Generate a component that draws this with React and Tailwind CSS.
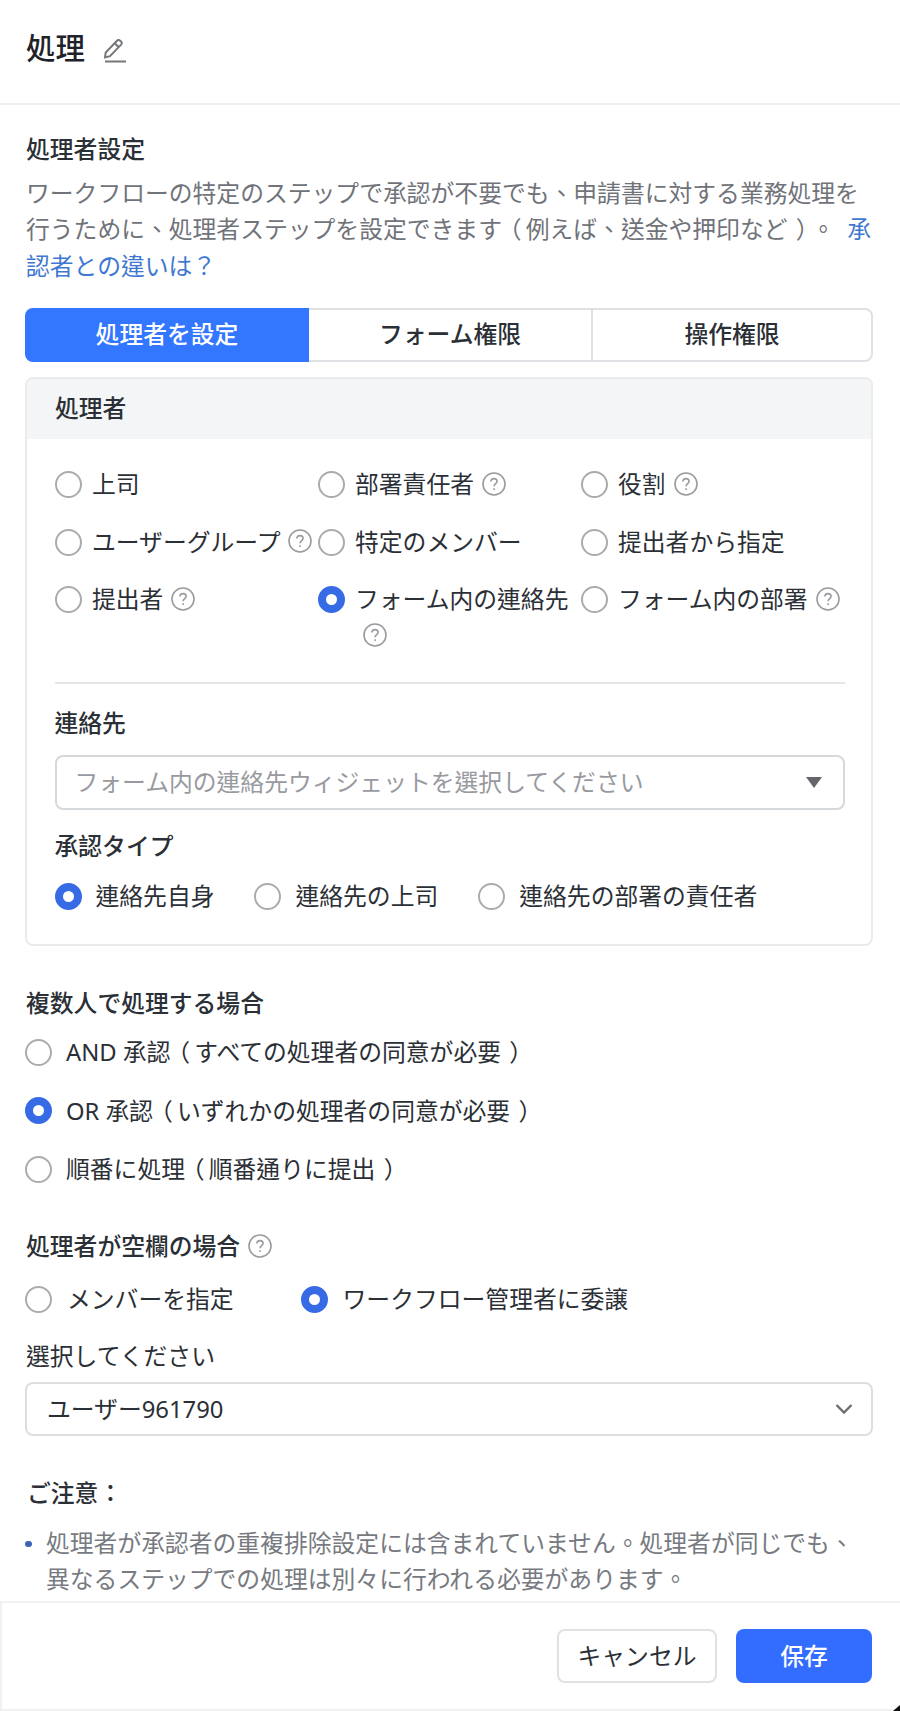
import { useState } from 'react';

const assigneeTypes = [
  { id: 'manager', label: '上司' },
  { id: 'dept-owner', label: '部署責任者', help: true },
  { id: 'role', label: '役割', help: true },
  { id: 'group', label: 'ユーザーグループ', help: true },
  { id: 'member', label: '特定のメンバー' },
  { id: 'by-submitter', label: '提出者から指定' },
  { id: 'submitter', label: '提出者', help: true },
  { id: 'form-contact', label: 'フォーム内の連絡先', help: true },
  { id: 'form-dept', label: 'フォーム内の部署', help: true },
];

const approvalTypes = [
  { id: 'self', label: '連絡先自身' },
  { id: 'manager', label: '連絡先の上司' },
  { id: 'owner', label: '連絡先の部署の責任者' },
];

const multiModes = [
  { id: 'and', label: 'AND 承認', note: 'すべての処理者の同意が必要' },
  { id: 'or', label: 'OR 承認', note: 'いずれかの処理者の同意が必要' },
  { id: 'order', label: '順番に処理', note: '順番通りに提出' },
];

const tabs = [
  { label: '処理者を設定', width: 'w-[284px]' },
  { label: 'フォーム権限', width: 'w-[282px]' },
  { label: '操作権限', width: 'flex-1' },
];

// Full-width parentheses, centred in their cells
function Paren({ children }) {
  return (
    <>
      <span className="-ml-[0.18em] mr-[0.18em]">（</span>
      {children}
      <span className="ml-[0.35em] -mr-[0.35em]">）</span>
    </>
  );
}

function HelpIcon({ className = '' }) {
  return (
    <svg viewBox="0 0 24 24" fill="none" stroke="#999b9f" strokeWidth="1.6" className={`inline-block w-6 h-6 ${className}`}>
      <circle cx="12" cy="12" r="11" />
      <path d="M8.9 9.6c0-1.9 1.3-3 3.1-3s3.1 1.1 3.1 2.7c0 2.2-3 2.3-3 4.9" />
      <path d="M12.1 16.2v1.8" />
    </svg>
  );
}

function Radio({ checked, onClick, className = '' }) {
  return (
    <button
      type="button"
      role="radio"
      aria-checked={checked}
      onClick={onClick}
      className={`shrink-0 w-[27px] h-[27px] rounded-full bg-white ${
        checked ? 'border-[8.5px] border-[#376be6]' : 'border-2 border-[#a9abae]'
      } ${className}`}
    />
  );
}

export default function App() {
  const [tab, setTab] = useState(0);
  const [assignee, setAssignee] = useState('form-contact');
  const [approval, setApproval] = useState('self');
  const [mode, setMode] = useState('or');
  const [fallback, setFallback] = useState('admin');

  return (
    <div className="relative flex flex-col w-[900px] h-[1711px] overflow-hidden bg-white text-[#2b2f36] text-[23.8px] leading-[36.5px] font-['Noto_Sans','Noto_Sans_CJK_TC',sans-serif] [text-spacing-trim:space-all]">
      {/* Header */}
      <header className="shrink-0 flex items-center h-[105px] pb-[6px] px-[26px] border-b-2 border-[#eeeff0]">
        <h1 className="text-[29.5px] font-medium text-[#1f2329]">処理</h1>
        <svg viewBox="0 0 24 24" fill="none" stroke="#74777b" strokeWidth="2" className="w-6 h-6 ml-[18px] mt-[5px]">
          <path d="M2 18.5l.7-5L14 1.8c1-1 2.200-.9 3.100-.1l1 .9c.9.900.9 2 0 3L7 17.200l-5 1.300z" />
          <path d="M11.800 4.200l4 4M2 22.500h21" />
        </svg>
      </header>

      <main className="flex-1 min-h-0 pl-[25px] pr-[27px] pt-[26px]">
        <h2 className="pl-px font-medium">処理者設定</h2>
        <p className="mt-[7px] pl-px -mr-2 pr-1 text-[#707379]">
          ワークフローの特定のステップで承認が不要でも、申請書に対する業務処理を行うために、処理者ステップを設定できます
          <Paren>例えば、送金や押印など</Paren>。{' '}
          <a className="pl-1.5 text-[#3f78d0]">承認者との違いは？</a>
        </p>

        {/* Tabs */}
        <div className="flex mt-[23.5px] h-[54px] border-2 border-[#dfe1e4] rounded-lg">
          {tabs.map((t, i) => (
            <button
              key={t.label}
              onClick={() => setTab(i)}
              className={`${t.width} font-medium ${i === 2 ? 'border-l-2 border-[#dfe1e4]' : ''} ${
                tab === i ? 'bg-[#3376ff] text-white -my-0.5 -ml-0.5 rounded-l-lg' : ''
              }`}
            >
              {t.label}
            </button>
          ))}
        </div>

        {/* Assignee panel */}
        <section className="mt-[15px] h-[569px] border-2 border-[#e9ebed] rounded-lg">
          <div className="h-[60px] px-7 flex items-center rounded-t-md bg-[#f4f5f7]">
            <h3 className="font-medium">処理者</h3>
          </div>
          <div className="pl-[27.5px] pr-[26px] pt-[27.5px]">
            <div className="grid grid-cols-[263px_263px_1fr] gap-y-[21px]">
              {assigneeTypes.map((a) => (
                <div key={a.id} className="flex items-start">
                  <Radio checked={assignee === a.id} onClick={() => setAssignee(a.id)} className="mt-[5px]" />
                  <span className="ml-[10.5px]">
                    {a.label}
                    {a.help && <HelpIcon className="ml-2 -mt-1.5 align-middle" />}
                  </span>
                </div>
              ))}
            </div>
            <hr className="mt-7 border-t-2 border-[#e4e6e8]" />
            <h3 className="mt-[21px] font-medium">連絡先</h3>
            <div className="mt-[13px] h-[55px] px-[18px] flex items-center justify-between border-2 border-[#d6d9db] rounded-lg">
              <span className="text-[#989a9f]">フォーム内の連絡先ウィジェットを選択してください</span>
              <svg viewBox="0 0 18 12" className="w-[18px] h-3 mr-0.5">
                <path d="M1 1h16L9 12z" fill="#646669" />
              </svg>
            </div>
            <h3 className="mt-[18px] font-medium">承認タイプ</h3>
            <div className="mt-[14px] flex items-center gap-[40px]">
              {approvalTypes.map((a) => (
                <div key={a.id} className="flex items-center gap-[14px]">
                  <Radio checked={approval === a.id} onClick={() => setApproval(a.id)} />
                  <span>{a.label}</span>
                </div>
              ))}
            </div>
          </div>
        </section>

        {/* Multiple assignees */}
        <h2 className="mt-[39px] pl-px font-medium">複数人で処理する場合</h2>
        <div className="mt-[13px] flex flex-col gap-[22px]">
          {multiModes.map((m) => (
            <div key={m.id} className="flex items-center gap-[14px]">
              <Radio checked={mode === m.id} onClick={() => setMode(m.id)} />
              <span className="whitespace-nowrap">
                {m.label}
                <Paren>{m.note}</Paren>
              </span>
            </div>
          ))}
        </div>

        {/* Empty assignee */}
        <h2 className="mt-[40px] pl-px flex items-center gap-2 font-medium">
          処理者が空欄の場合
          <HelpIcon />
        </h2>
        <div className="mt-[17px] flex items-center">
          <Radio checked={fallback === 'member'} onClick={() => setFallback('member')} />
          <span className="ml-[15px] mr-[67px]">メンバーを指定</span>
          <Radio checked={fallback === 'admin'} onClick={() => setFallback('admin')} />
          <span className="ml-[15px]">ワークフロー管理者に委譲</span>
        </div>
        <p className="mt-[20px] pl-px">選択してください</p>
        <div className="mt-[8px] h-[54px] pl-5 pr-[18px] flex items-center justify-between border-2 border-[#dcdee0] rounded-lg">
          <span>ユーザー961790</span>
          <svg viewBox="0 0 18 12" fill="none" stroke="#6c6e72" strokeWidth="2.4" className="w-[18px] h-3">
            <path d="M1.500 2L9 9.500 16.500 2" />
          </svg>
        </div>

        {/* Notice */}
        <h2 className="mt-[39px] pl-0.5 font-medium">ご注意：</h2>
        <ul className="mt-[13px] text-[#777a80]">
          <li className="flex">
            <span className="shrink-0 w-[7px] h-[6px] mt-[16px] mr-[14px] rounded-sm bg-[#3f66b5]" />
            <span>処理者が承認者の重複排除設定には含まれていません。処理者が同じでも、異なるステップでの処理は別々に行われる必要があります。</span>
          </li>
        </ul>
      </main>

      {/* Footer */}
      <footer className="h-[110px] shrink-0 pr-7 flex items-center justify-end gap-[19px] border-2 border-r-0 border-[#f0f1f2]">
        <button className="w-[160px] h-[54px] border-2 border-[#dfe1e3] rounded-lg">キャンセル</button>
        <button className="w-[136px] h-[54px] rounded-lg bg-[#336dff] text-white font-medium">保存</button>
      </footer>
      <div className="absolute right-0 bottom-0 w-[7px] h-[6px] bg-[#111] [clip-path:polygon(100%_0,100%_100%,0_100%)]" />
    </div>
  );
}
